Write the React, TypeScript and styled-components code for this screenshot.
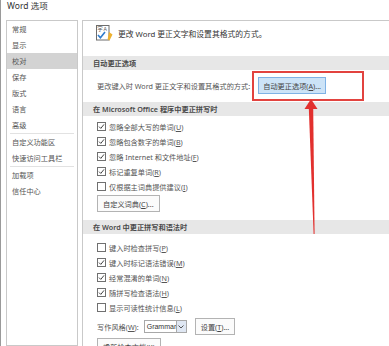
import styled, { createGlobalStyle } from 'styled-components';

const GlobalStyle = createGlobalStyle`
  html, body {
    margin: 0;
    padding: 0;
    background: #fff;
  }
  body {
    font-family: "Noto Sans", "Noto Sans CJK SC", sans-serif;
    font-size: 7.2px;
    color: #555;
  }
  #root {
    width: 389px;
    height: 346px;
    overflow: hidden;
  }
`;

const Window = styled.div`
  position: relative;
  width: 389px;
  height: 346px;
  box-sizing: border-box;
  overflow: hidden;
  border-left: 1px solid #9a9a9a;
  padding-left: 5px;
  background: #fff;
`;

const TitleBar = styled.div`
  height: 20px;
  line-height: 12px;
  padding-left: 1px;
  font-size: 8.5px;
  color: #333;
`;

const Body = styled.div`
  display: flex;
  gap: 4px;
  height: 326px;
`;

// 왼쪽 메뉴
const Nav = styled.div`
  width: 72px;
  box-sizing: border-box;
  border: 1px solid #c9c9c9;
  display: flex;
  flex-direction: column;
`;

const NavItem = styled.div<{ $active?: boolean }>`
  height: 16px;
  line-height: 16px;
  padding-left: 5px;
  white-space: nowrap;
  color: #555;
  background: ${(p) => (p.$active ? '#d3d3d3' : 'transparent')};
`;

const NavSep = styled.div`
  height: 1px;
  margin: 0 3px;
  background: #e2e2e2;
`;

// 오른쪽 본문
const Main = styled.div`
  flex: 1;
  min-width: 0;
  overflow: hidden;
  border-left: 1px solid #c9c9c9;
  border-top: 1px solid #c9c9c9;
`;

const Intro = styled.div`
  height: 24px;
  margin-bottom: 11px;
  padding-left: 13px;
  display: flex;
  align-items: center;
  gap: 4px;
  font-size: 7.8px;
  color: #333;
  white-space: nowrap;
`;

const SectionHeader = styled.div`
  height: 14px;
  line-height: 14px;
  padding-left: 10px;
  background: #e7e7e7;
  color: #4a4a4a;
  font-weight: 600;
  white-space: nowrap;
`;

const AutoRow = styled.div`
  height: 32px;
  padding-left: 14px;
  display: flex;
  align-items: center;
  gap: 2px;
  white-space: nowrap;
`;

const RedFrame = styled.div`
  display: inline-flex;
  border: 2px solid #e2433f;
  padding: 4px 36px 5px 4px;
`;

const Button = styled.div<{ $primary?: boolean }>`
  display: inline-flex;
  align-items: center;
  height: 17px;
  box-sizing: border-box;
  padding: 0 ${(p) => (p.$primary ? 4 : 5)}px;
  border: 1px solid ${(p) => (p.$primary ? '#7fb2e5' : '#b3b3b3')};
  background: ${(p) => (p.$primary ? '#cce3f7' : '#fbfbfb')};
  color: #444;
  white-space: nowrap;
`;

const CheckList = styled.div<{ $top: number }>`
  padding: ${(p) => p.$top}px 0 0 14px;
  display: flex;
  flex-direction: column;
`;

const CheckRow = styled.div`
  height: 15px;
  display: flex;
  align-items: center;
  white-space: nowrap;
`;

const Box = styled.span`
  width: 9px;
  height: 9px;
  box-sizing: border-box;
  border: 1px solid #707070;
  background: #fff;
  margin-right: 3px;
  display: inline-flex;
  align-items: center;
  justify-content: center;
`;

const ButtonRow = styled.div<{ $top: number; $bottom?: number }>`
  display: flex;
  align-items: center;
  gap: 8px;
  padding-left: 14px;
  margin-top: ${(p) => p.$top}px;
  margin-bottom: ${(p) => p.$bottom ?? 0}px;
  white-space: nowrap;
`;

const StyleLabel = styled.span`
  margin-right: -3px;
`;

const Select = styled.div`
  display: flex;
  height: 13px;
  width: 43px;
  box-sizing: border-box;
  border: 1px solid #a8a8a8;
  background: #fff;
`;

const SelectText = styled.span`
  flex: 1;
  padding-left: 2px;
  line-height: 11px;
  font-family: "Liberation Sans", sans-serif;
  font-size: 7px;
  color: #333;
`;

const SelectArrow = styled.span`
  width: 9px;
  background: #dfe7f3;
  border-left: 1px solid #a8a8a8;
  display: flex;
  align-items: center;
  justify-content: center;
`;

const Overlay = styled.svg`
  position: absolute;
  left: 0;
  top: 0;
  pointer-events: none;
`;

const Acc = styled.u`
  text-underline-offset: 1px;
`;

function Check({ checked }: { checked?: boolean }) {
  return (
    <Box>
      {checked && (
        <svg width="7" height="7" viewBox="0 0 7 7">
          <path d="M1 3.6 L2.8 5.4 L6 1.4" stroke="#444" strokeWidth="1" fill="none" />
        </svg>
      )}
    </Box>
  );
}

function ProofIcon() {
  return (
    <svg width="18" height="16" viewBox="0 0 18 16">
      <rect x="0.5" y="0.5" width="12.5" height="14.5" fill="#fff" stroke="#6d6d6d" />
      <text x="1.2" y="6.3" fontSize="5.5" fill="#555" fontFamily="Noto Sans CJK SC">字</text>
      <text x="7.5" y="5.8" fontSize="5" fill="#555" fontFamily="Liberation Sans">A</text>
      <path d="M2 10 L4.4 12.8 L9 7" stroke="#2f7bcb" strokeWidth="1.6" fill="none" />
      <path d="M13 7 L16.5 9.5 L13.5 15.6 L11.6 14.6 Z" fill="#eeb12e" />
    </svg>
  );
}

const navItems = [
  '常规', '显示', '校对', '保存', '版式', '语言', '高级', '|',
  '自定义功能区', '快速访问工具栏', '|', '加载项', '信任中心',
];

const officeChecks: [boolean, string, string][] = [
  [true, '忽略全部大写的单词', 'U'],
  [true, '忽略包含数字的单词', 'B'],
  [true, '忽略 Internet 和文件地址', 'F'],
  [true, '标记重复单词', 'R'],
  [false, '仅根据主词典提供建议', 'I'],
];

const wordChecks: [boolean, string, string][] = [
  [false, '键入时检查拼写', 'P'],
  [true, '键入时标记语法错误', 'M'],
  [true, '经常混淆的单词', 'N'],
  [true, '随拼写检查语法', 'H'],
  [false, '显示可读性统计信息', 'L'],
];

function App() {
  return (
    <Window>
      <GlobalStyle />
      <TitleBar>Word 选项</TitleBar>
      <Body>
        <Nav>
          {navItems.map((n, i) =>
            n === '|' ? (
              <NavSep key={i} />
            ) : (
              <NavItem key={i} $active={n === '校对'}>
                {n}
              </NavItem>
            )
          )}
        </Nav>
        <Main>
          <Intro>
            <ProofIcon />
            <span>更改 Word 更正文字和设置其格式的方式。</span>
          </Intro>

          <SectionHeader>自动更正选项</SectionHeader>
          <AutoRow>
            <span>更改键入时 Word 更正文字和设置其格式的方式:</span>
            <RedFrame>
              <Button $primary>
                自动更正选项(<Acc>A</Acc>)...
              </Button>
            </RedFrame>
          </AutoRow>

          <SectionHeader>在 Microsoft Office 程序中更正拼写时</SectionHeader>
          <CheckList $top={3}>
            {officeChecks.map(([c, label, key]) => (
              <CheckRow key={key}>
                <Check checked={c} />
                {label}(<Acc>{key}</Acc>)
              </CheckRow>
            ))}
          </CheckList>
          <ButtonRow $top={1} $bottom={8}>
            <Button>
              自定义词典(<Acc>C</Acc>)...
            </Button>
          </ButtonRow>

          <SectionHeader>在 Word 中更正拼写和语法时</SectionHeader>
          <CheckList $top={6}>
            {wordChecks.map(([c, label, key]) => (
              <CheckRow key={key}>
                <Check checked={c} />
                {label}(<Acc>{key}</Acc>)
              </CheckRow>
            ))}
          </CheckList>
          <ButtonRow $top={3}>
            <StyleLabel>
              写作风格(<Acc>W</Acc>):
            </StyleLabel>
            <Select>
              <SelectText>Grammar</SelectText>
              <SelectArrow>
                <svg width="6" height="4" viewBox="0 0 6 4">
                  <path d="M0.5 0.5 L3 3 L5.5 0.5" stroke="#444" strokeWidth="0.9" fill="none" />
                </svg>
              </SelectArrow>
            </Select>
            <Button>
              设置(<Acc>T</Acc>)...
            </Button>
          </ButtonRow>
          <ButtonRow $top={3}>
            <Button>
              重新检查文档(<Acc>K</Acc>)
            </Button>
          </ButtonRow>
        </Main>
      </Body>
      <Overlay width="389" height="346" viewBox="0 0 389 346">
        <path d="M310 99 L316.5 109 L303.5 109 Z" fill="#e2302e" />
        <path d="M307.8 108 L312.2 108 L313.6 234 L312.6 234 Z" fill="#e2302e" />
      </Overlay>
    </Window>
  );
}

export default App;
